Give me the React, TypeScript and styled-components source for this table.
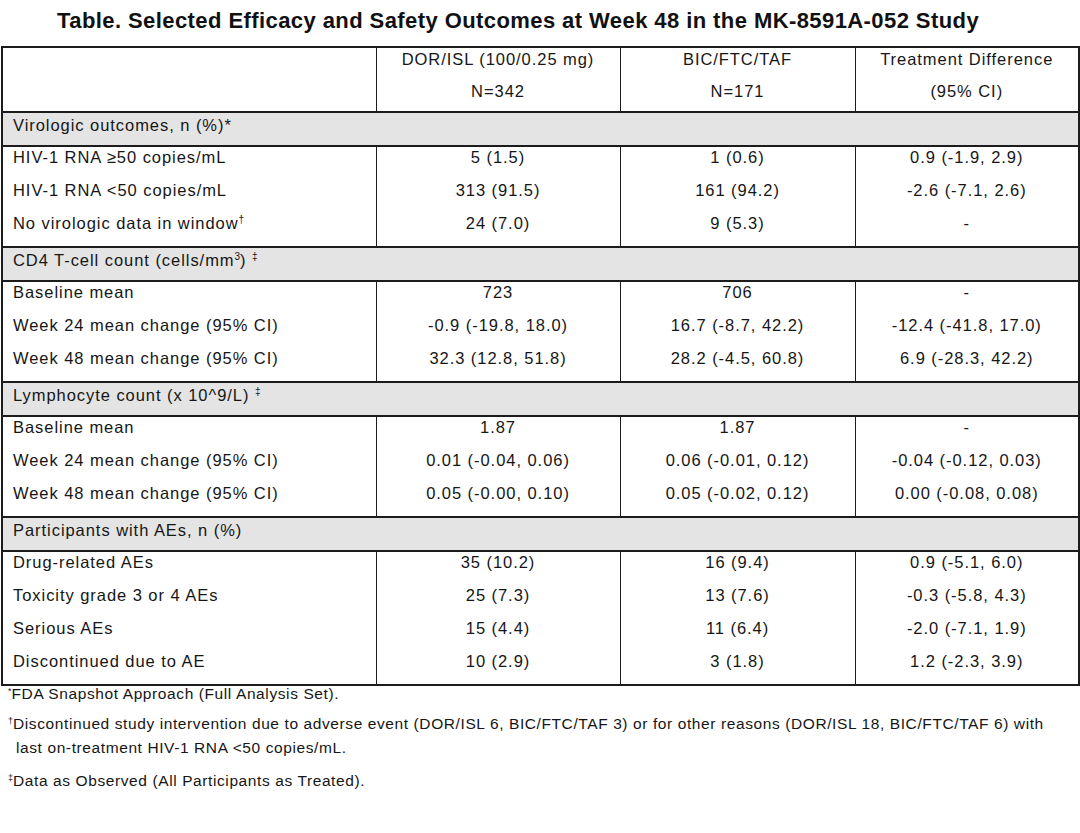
import React from "react";
import styled, { createGlobalStyle } from "styled-components";

const Global = createGlobalStyle`
  html, body { margin: 0; padding: 0; background: #fff; }
  body { font-family: "Liberation Sans", Arial, sans-serif; }
`;

const Page = styled.div`
  width: 1080px;
  height: 833px;
  background: #fff;
  color: #161616;
  font-family: "Liberation Sans", Arial, sans-serif;
  overflow: hidden;
`;

const Title = styled.h1`
  margin: 0;
  height: 46px;
  box-sizing: border-box;
  padding: 9px 0 0 57px;
  font-size: 22px;
  line-height: 24px;
  font-weight: bold;
  letter-spacing: 0.42px;
  color: #111;
  white-space: nowrap;
`;

const Table = styled.table`
  width: 1077px;
  margin-left: 1px;
  border-collapse: collapse;
  table-layout: fixed;
  border: 2px solid #1c1c1c;
  font-size: 16.5px;
  letter-spacing: 0.95px;
`;

const Col = styled.col<{ $w: number }>`
  width: ${(p) => p.$w}px;
`;

const HeadCell = styled.th`
  font-weight: normal;
  text-align: center;
  vertical-align: top;
  padding: 0;
  border-left: 1px solid #1c1c1c;
  border-right: 1px solid #1c1c1c;
  border-bottom: 2px solid #1c1c1c;
`;

const Line = styled.div<{ $h: number }>`
  height: ${(p) => p.$h}px;
  line-height: 22px;
`;

const GroupCell = styled.td`
  background: #e4e4e4;
  height: 32px;
  padding: 0 0 0 10px;
  vertical-align: top;
  line-height: 24px;
  border-top: 2px solid #1c1c1c;
  border-bottom: 2px solid #1c1c1c;
`;

const DataCell = styled.td<{ $first?: boolean }>`
  height: 33px;
  padding: 0 0 0 ${(p) => (p.$first ? "10px" : "0")};
  text-align: ${(p) => (p.$first ? "left" : "center")};
  vertical-align: top;
  line-height: 21px;
  border-left: 1px solid #1c1c1c;
  border-right: 1px solid #1c1c1c;
  white-space: nowrap;
`;

const Sup = styled.sup`
  font-size: 10px;
  line-height: 0;
  vertical-align: 6px;
  letter-spacing: 0;
`;

const Notes = styled.div`
  font-size: 15.5px;
  letter-spacing: 0.6px;
  color: #161616;
`;

const Note = styled.div<{ $mt: number; $indent: number }>`
  margin-top: ${(p) => p.$mt}px;
  padding-left: ${(p) => p.$indent}px;
  line-height: 20px;
  white-space: nowrap;
`;

const NoteMark = styled.sup`
  font-size: 9px;
  line-height: 0;
  vertical-align: 5px;
  letter-spacing: 0;
`;

type Row = [React.ReactNode, string, string, string];
type Group = { title: React.ReactNode; rows: Row[] };

const groups: Group[] = [
  {
    title: "Virologic outcomes, n (%)*",
    rows: [
      ["HIV-1 RNA ≥50 copies/mL", "5 (1.5)", "1 (0.6)", "0.9 (-1.9, 2.9)"],
      ["HIV-1 RNA <50 copies/mL", "313 (91.5)", "161 (94.2)", "-2.6 (-7.1, 2.6)"],
      [
        <>
          No virologic data in window<Sup>†</Sup>
        </>,
        "24 (7.0)",
        "9 (5.3)",
        "-",
      ],
    ],
  },
  {
    title: (
      <>
        CD4 T-cell count (cells/mm<Sup>3</Sup>) <Sup>‡</Sup>
      </>
    ),
    rows: [
      ["Baseline mean", "723", "706", "-"],
      ["Week 24 mean change (95% CI)", "-0.9 (-19.8, 18.0)", "16.7 (-8.7, 42.2)", "-12.4 (-41.8, 17.0)"],
      ["Week 48 mean change (95% CI)", "32.3 (12.8, 51.8)", "28.2 (-4.5, 60.8)", "6.9 (-28.3, 42.2)"],
    ],
  },
  {
    title: (
      <>
        Lymphocyte count (x 10^9/L) <Sup>‡</Sup>
      </>
    ),
    rows: [
      ["Baseline mean", "1.87", "1.87", "-"],
      ["Week 24 mean change (95% CI)", "0.01 (-0.04, 0.06)", "0.06 (-0.01, 0.12)", "-0.04 (-0.12, 0.03)"],
      ["Week 48 mean change (95% CI)", "0.05 (-0.00, 0.10)", "0.05 (-0.02, 0.12)", "0.00 (-0.08, 0.08)"],
    ],
  },
  {
    title: "Participants with AEs, n (%)",
    rows: [
      ["Drug-related AEs", "35 (10.2)", "16 (9.4)", "0.9 (-5.1, 6.0)"],
      ["Toxicity grade 3 or 4 AEs", "25 (7.3)", "13 (7.6)", "-0.3 (-5.8, 4.3)"],
      ["Serious AEs", "15 (4.4)", "11 (6.4)", "-2.0 (-7.1, 1.9)"],
      ["Discontinued due to AE", "10 (2.9)", "3 (1.8)", "1.2 (-2.3, 3.9)"],
    ],
  },
];

export default function App() {
  return (
    <Page>
      <Global />
      <Title>Table. Selected Efficacy and Safety Outcomes at Week 48 in the MK-8591A-052 Study</Title>
      <Table>
        <colgroup>
          <Col $w={374} />
          <Col $w={244} />
          <Col $w={235} />
          <Col $w={224} />
        </colgroup>
        <thead>
          <tr>
            <HeadCell>
              <Line $h={32} />
              <Line $h={31} />
            </HeadCell>
            <HeadCell>
              <Line $h={32}>DOR/ISL (100/0.25 mg)</Line>
              <Line $h={31}>N=342</Line>
            </HeadCell>
            <HeadCell>
              <Line $h={32}>BIC/FTC/TAF</Line>
              <Line $h={31}>N=171</Line>
            </HeadCell>
            <HeadCell>
              <Line $h={32}>Treatment Difference</Line>
              <Line $h={31}>(95% CI)</Line>
            </HeadCell>
          </tr>
        </thead>
        {groups.map((g, gi) => (
          <tbody key={gi}>
            <tr>
              <GroupCell colSpan={4}>{g.title}</GroupCell>
            </tr>
            {g.rows.map((r, ri) => (
              <tr key={ri}>
                <DataCell $first>{r[0]}</DataCell>
                <DataCell>{r[1]}</DataCell>
                <DataCell>{r[2]}</DataCell>
                <DataCell>{r[3]}</DataCell>
              </tr>
            ))}
          </tbody>
        ))}
      </Table>
      <Notes>
        <Note $mt={-2} $indent={8}>
          <NoteMark>*</NoteMark>FDA Snapshot Approach (Full Analysis Set).
        </Note>
        <Note $mt={10} $indent={8}>
          <NoteMark>†</NoteMark>Discontinued study intervention due to adverse event (DOR/ISL 6, BIC/FTC/TAF 3) or for other
          reasons (DOR/ISL 18, BIC/FTC/TAF 6) with
        </Note>
        <Note $mt={4} $indent={16}>
          last on-treatment HIV-1 RNA &lt;50 copies/mL.
        </Note>
        <Note $mt={13} $indent={8}>
          <NoteMark>‡</NoteMark>Data as Observed (All Participants as Treated).
        </Note>
      </Notes>
    </Page>
  );
}
